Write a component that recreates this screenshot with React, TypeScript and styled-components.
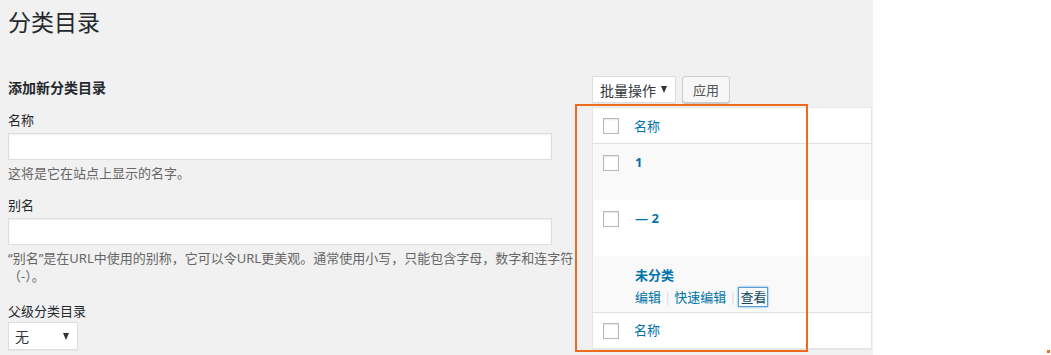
import React from "react";
import styled, { createGlobalStyle } from "styled-components";

const GlobalStyle = createGlobalStyle`
  html, body { margin: 0; padding: 0; background: #fff; }
  body {
    font-family: "Noto Sans", "Noto Sans CJK SC", sans-serif;
    font-size: 13px;
    color: #444;
  }
  * { box-sizing: border-box; }
`;

const Page = styled.div`
  position: relative;
  width: 1051px;
  height: 355px;
  overflow: hidden;
  background: #fff;
`;

const Panel = styled.div`
  width: 873px;
  height: 355px;
  background: #f1f1f1;
  padding-left: 8px;
`;

const Title = styled.h1`
  margin: 0;
  padding-top: 8px;
  font-size: 23px;
  font-weight: 400;
  line-height: 29px;
  color: #23282d;
`;

const Columns = styled.div`
  display: flex;
  gap: 17px;
`;

const LeftCol = styled.div`
  width: 567px;
  display: flex;
  flex-direction: column;
`;

const RightCol = styled.div`
  width: 280px;
  display: flex;
  flex-direction: column;
`;

const FormTitle = styled.h2`
  margin: 41px 0 0;
  font-size: 14px;
  font-weight: 700;
  line-height: 20px;
  color: #23282d;
`;

const Label = styled.label<{ $gap: number }>`
  display: block;
  margin-top: ${(p) => p.$gap}px;
  font-size: 13px;
  line-height: 20px;
  color: #23282d;
`;

const TextInput = styled.div`
  margin-top: 3px;
  width: 544px;
  height: 27px;
  background: #fff;
  border: 1px solid #ddd;
  box-shadow: inset 0 1px 2px rgba(0, 0, 0, 0.07);
`;

const Description = styled.p`
  margin: 4px 0 0;
  font-size: 13px;
  line-height: 18px;
  color: #666;
`;

const FakeSelect = styled.div<{ $width: number }>`
  display: flex;
  align-items: center;
  justify-content: space-between;
  width: ${(p) => p.$width}px;
  height: 28px;
  padding: 0 8px 0 7px;
  background: #fff;
  border: 1px solid #ddd;
  box-shadow: 0 1px 1px rgba(0, 0, 0, 0.04);
  font-size: 14px;
  color: #32373c;
`;

const Arrow = styled.span`
  width: 0;
  height: 0;
  border-left: 3.5px solid transparent;
  border-right: 3.5px solid transparent;
  border-top: 7px solid #333;
`;

const ParentSelect = styled(FakeSelect)`
  margin-top: 1px;
  padding-left: 6px;
`;

const BulkBar = styled.div`
  margin-top: 39px;
  display: flex;
  gap: 6px;
  align-items: center;
`;

const BulkSelect = styled(FakeSelect)`
  height: 27px;
`;

const Button = styled.div`
  height: 27px;
  padding: 0 10px;
  display: flex;
  align-items: center;
  background: #f7f7f7;
  border: 1px solid #ccc;
  border-radius: 3px;
  box-shadow: 0 1px 0 #ccc;
  font-size: 13px;
  color: #555;
`;

const Table = styled.div`
  margin-top: 4px;
  border: 1px solid #e5e5e5;
  box-shadow: 0 1px 1px rgba(0, 0, 0, 0.04);
  background: #fff;
`;

const Row = styled.div<{ $height: number; $alt?: boolean; $line?: "top" | "bottom" }>`
  display: flex;
  height: ${(p) => p.$height}px;
  background: ${(p) => (p.$alt ? "#f9f9f9" : "#fff")};
  border-bottom: ${(p) => (p.$line === "bottom" ? "1px solid #e1e1e1" : "none")};
  border-top: ${(p) => (p.$line === "top" ? "1px solid #e1e1e1" : "none")};
`;

const CheckCell = styled.div<{ $top: number }>`
  width: 41px;
  padding: ${(p) => p.$top}px 0 0 10px;
`;

const Checkbox = styled.span`
  display: block;
  width: 16px;
  height: 16px;
  background: #fff;
  border: 1px solid #b4b9be;
  box-shadow: inset 0 1px 2px rgba(0, 0, 0, 0.1);
`;

const NameCell = styled.div<{ $top: number }>`
  flex: 1;
  padding-top: ${(p) => p.$top}px;
  display: flex;
  flex-direction: column;
`;

const HeadLink = styled.span`
  font-size: 13px;
  line-height: 20px;
  color: #0073aa;
`;

const RowTitle = styled.span`
  font-size: 13px;
  line-height: 20px;
  font-weight: 700;
  color: #0073aa;
  padding-left: 1px;
`;

const Actions = styled.div`
  display: flex;
  align-items: center;
  margin-top: 3px;
  padding-left: 1px;
  font-size: 13px;
  line-height: 18px;
  color: #0073aa;
`;

const Sep = styled.span`
  color: #ddd;
  margin: 0 3px 0 3px;
`;

const Focused = styled.span`
  box-shadow: 0 0 0 1px #5b9dd9, 0 0 2px 1px rgba(30, 140, 190, 0.8);
  color: #124964;
  padding: 0 1px;
`;

const Highlight = styled.div`
  position: absolute;
  left: 575px;
  top: 104px;
  width: 233px;
  height: 248px;
  border: 2px solid #ec6c1c;
  pointer-events: none;
`;

const Dot = styled.div`
  position: absolute;
  left: 1047px;
  top: 350px;
  width: 3px;
  height: 3px;
  background: #ec6c1c;
`;

export default function App() {
  return (
    <Page>
      <GlobalStyle />
      <Panel>
        <Title>分类目录</Title>
        <Columns>
          <LeftCol>
            <FormTitle>添加新分类目录</FormTitle>
            <Label $gap={12}>名称</Label>
            <TextInput />
            <Description>这将是它在站点上显示的名字。</Description>
            <Label $gap={13}>别名</Label>
            <TextInput />
            <Description>
              “别名”是在URL中使用的别称，它可以令URL更美观。通常使用小写，只能包含字母，数字和连字符
              <br />（-）。
            </Description>
            <Label $gap={16}>父级分类目录</Label>
            <ParentSelect $width={70}>
              <span>无</span>
              <Arrow />
            </ParentSelect>
          </LeftCol>
          <RightCol>
            <BulkBar>
              <BulkSelect $width={84}>
                <span>批量操作</span>
                <Arrow />
              </BulkSelect>
              <Button>应用</Button>
            </BulkBar>
            <Table>
              <Row $height={36} $line="bottom">
                <CheckCell $top={10}>
                  <Checkbox />
                </CheckCell>
                <NameCell $top={8}>
                  <HeadLink>名称</HeadLink>
                </NameCell>
              </Row>
              <Row $height={56} $alt>
                <CheckCell $top={11}>
                  <Checkbox />
                </CheckCell>
                <NameCell $top={8}>
                  <RowTitle>1</RowTitle>
                </NameCell>
              </Row>
              <Row $height={56}>
                <CheckCell $top={11}>
                  <Checkbox />
                </CheckCell>
                <NameCell $top={8}>
                  <RowTitle>— 2</RowTitle>
                </NameCell>
              </Row>
              <Row $height={56} $alt>
                <CheckCell $top={11}>
                  <span />
                </CheckCell>
                <NameCell $top={9}>
                  <RowTitle>未分类</RowTitle>
                  <Actions>
                    <span>编辑</span>
                    <Sep>|</Sep>
                    <span>快速编辑</span>
                    <Sep>|</Sep>
                    <Focused>查看</Focused>
                  </Actions>
                </NameCell>
              </Row>
              <Row $height={36} $line="top">
                <CheckCell $top={10}>
                  <Checkbox />
                </CheckCell>
                <NameCell $top={7}>
                  <HeadLink>名称</HeadLink>
                </NameCell>
              </Row>
            </Table>
          </RightCol>
        </Columns>
      </Panel>
      <Highlight />
      <Dot />
    </Page>
  );
}
